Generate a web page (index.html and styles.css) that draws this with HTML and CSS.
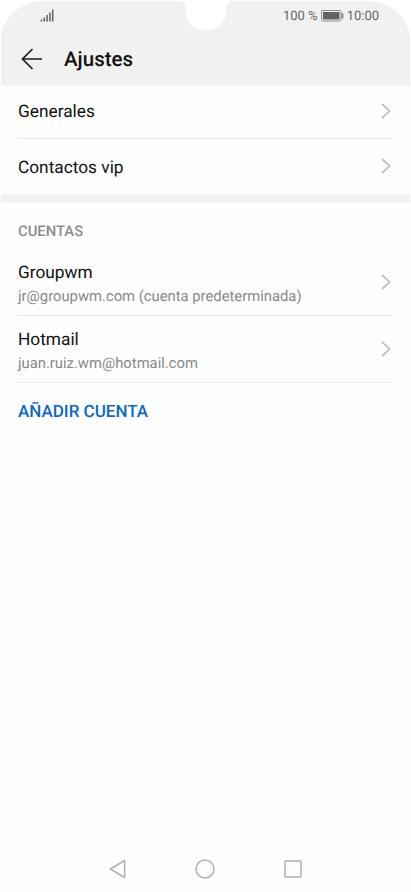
FILE: index.html
```html
<!DOCTYPE html>
<html lang="es">
<head>
<meta charset="utf-8">
<title>Ajustes</title>
<link rel="stylesheet" href="styles.css">
</head>
<body>
<svg class="defs" aria-hidden="true"><symbol id="chevron" viewBox="0 0 10 16"><path d="M1 .8L8.500 8 1 15.200" fill="none" stroke="#b9b9b9" stroke-width="1.600"/></symbol></svg>
<div class="phone">
  <header class="header">
    <svg class="notch" viewBox="0 0 54 31"><path d="M0 0H54V.8C49 .8 47.500 5 47.500 10C47.500 22 39 30 27 30S6.500 22 6.500 10C6.500 5 5 .8 0 .8Z" fill="#fff"/></svg>
    <div class="status">
      <svg class="signal" viewBox="0 0 14 13"><path d="M1.500 10.500V12.500M4.300 8.500V12.500M7.100 6V12.500M9.900 3.500V12.500M12.700 .5V12.500" fill="none" stroke="#606060" stroke-width="1.500"/></svg>
      <span class="percent">100 %</span>
      <svg class="battery" viewBox="0 0 23 12"><rect x=".5" y=".5" width="19.500" height="10.500" rx="1.500" fill="#f1f1f1" stroke="#8b8b8b"/><rect x="2" y="2" width="16.500" height="7.500" fill="#626262"/><path d="M21.500 3.300V8.500" stroke="#777" stroke-width="1.500"/></svg>
      <span class="clock">10:00</span>
    </div>
    <div class="titlebar">
      <svg class="back" viewBox="0 0 22 22"><path d="M11.500 1L1.500 11L11.500 21M1.500 11H21" fill="none" stroke="#1b1b1b" stroke-width="1.700"/></svg>
      <h1 class="title">Ajustes</h1>
    </div>
  </header>
  <main class="content">
    <div class="row general"><span class="name">Generales</span><svg class="chevron"><use href="#chevron"/></svg></div>
    <div class="row vip"><span class="name">Contactos vip</span><svg class="chevron"><use href="#chevron"/></svg></div>
    <div class="separator"></div>
    <h2 class="section">CUENTAS</h2>
    <div class="row account first">
      <div class="details"><div class="name">Groupwm</div><div class="mail">jr@groupwm.com (cuenta predeterminada)</div></div>
      <svg class="chevron"><use href="#chevron"/></svg>
    </div>
    <div class="row account">
      <div class="details"><div class="name">Hotmail</div><div class="mail">juan.ruiz.wm@hotmail.com</div></div>
      <svg class="chevron"><use href="#chevron"/></svg>
    </div>
    <div class="add">AÑADIR CUENTA</div>
  </main>
  <nav class="nav">
    <svg viewBox="0 0 20 20"><path d="M2.300 10L16.700 1.500V18.500Z"/></svg>
    <svg viewBox="0 0 20 20"><circle cx="10" cy="10" r="9"/></svg>
    <svg viewBox="0 0 20 20"><rect x="2" y="2" width="16" height="16" rx=".6"/></svg>
  </nav>
</div>
</body>
</html>
```
FILE: styles.css
```css
* { box-sizing: border-box; }
body { margin: 0; background: #fff; font-family: Roboto, sans-serif; color: #111; text-rendering: geometricPrecision; }
.defs { position: absolute; width: 0; height: 0; }
.phone { height: 892px; padding: 0 1px; display: flex; flex-direction: column; background: #fefefe; }
.header { position: relative; height: 86px; margin: 0 -1px; background: #fff; padding: 1px 1px 0; }
.header::before { content: ""; position: absolute; inset: 1px 1px 0; background: #f1f1f1; border-radius: 42px 42px 0 0 / 39px 39px 0 0; }
.notch { position: absolute; left: 178.500px; top: 0; width: 54px; height: 31px; }
.status { position: relative; height: 30px; display: flex; align-items: center; padding: 0 31px 0 39px; color: #666; font-size: 13px; line-height: 16px; }
.signal { width: 14px; height: 13px; margin-top: -2px; }
.percent { margin-left: auto; }
.percent, .clock { padding-top: 1px; }
.battery { width: 23px; height: 12px; margin: -1px 3px 0; }
.titlebar { position: relative; height: 56px; display: flex; align-items: center; padding: 0 19.500px; }
.back { width: 22px; height: 22px; margin-top: -1px; }
.title { margin: 2px 0 0 21.500px; font-size: 20.500px; font-weight: 500; line-height: 24px; }
.content { flex: 1; }
.row { display: flex; align-items: center; justify-content: space-between; margin: 0 18px 0 17px; padding-right: 1px; border-bottom: 0 solid #e8e8e8; }
.general { height: 53px; padding-bottom: 2px; border-bottom-width: 1px; }
.general .name { padding-top: 1px; }
.vip { height: 55px; }
.vip .name { padding-top: 2px; }
.vip .chevron { margin-bottom: 1px; }
.name { font-size: 17.300px; line-height: 20px; }
.chevron { width: 10px; height: 16px; flex: none; }
.separator { height: 9px; background: #f1f1f1; }
.section { margin: 19px 17px 0; font-size: 14.800px; line-height: 18px; font-weight: 500; color: #8c8c8c; }
.account { height: 67px; border-bottom-width: 1px; }
.account.first { height: 76px; padding-top: 9px; }
.details { padding-top: 3px; }
.mail { margin-top: 4px; font-size: 14.800px; line-height: 18px; color: #888; }
.add { margin: 19px 17px 0; font-size: 17px; line-height: 20px; font-weight: 500; color: #0b69c5; }
.nav { height: 46px; display: flex; justify-content: space-between; padding: 13px 107.500px 0 106.500px; }
.nav svg { width: 20px; height: 20px; fill: none; stroke: #b1b1b1; stroke-width: 1.500; stroke-linejoin: round; }
```
